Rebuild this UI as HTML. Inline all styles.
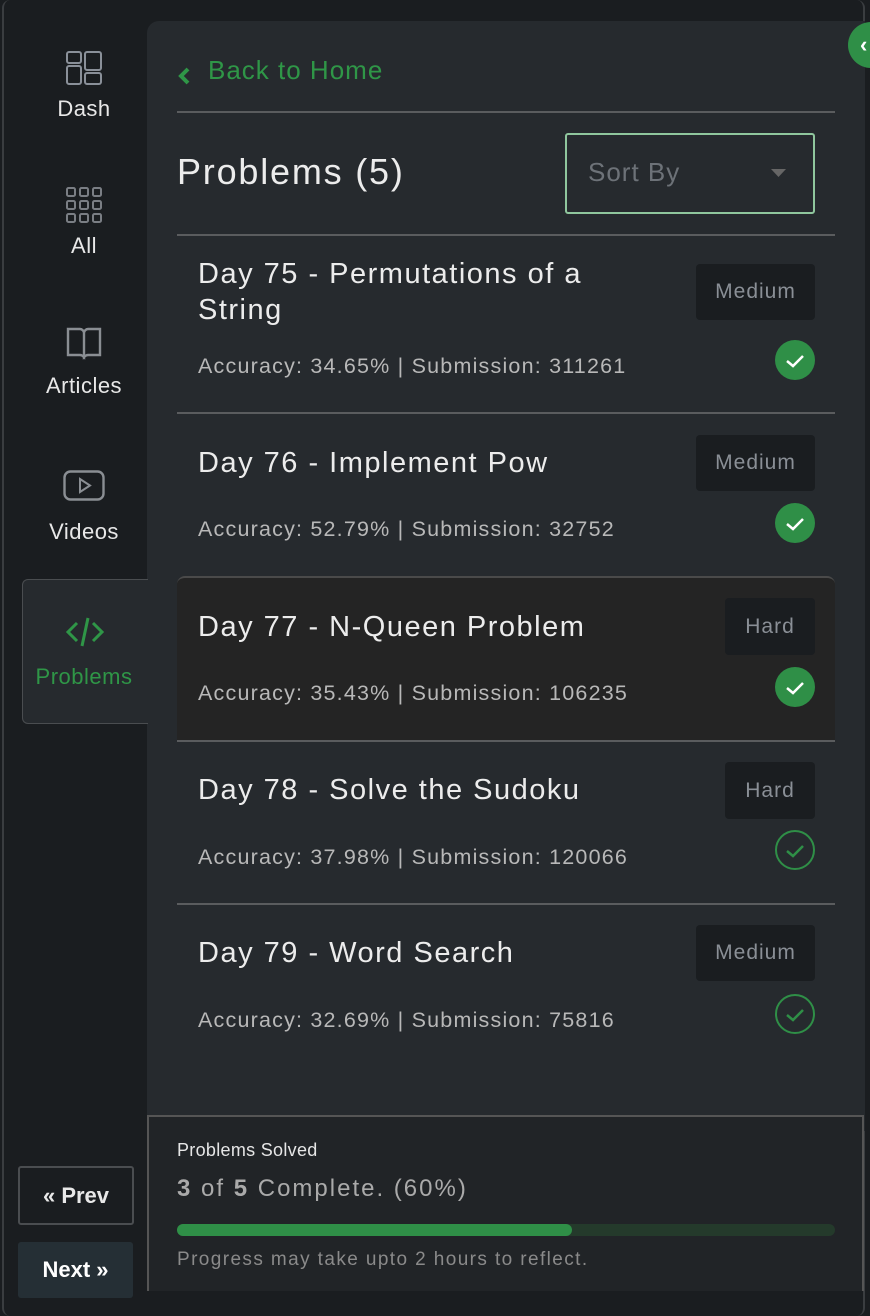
<!DOCTYPE html>
<html><head><meta charset="utf-8"><style>
*{margin:0;padding:0;box-sizing:border-box}
body{width:870px;height:1316px;background:#1a1d20;font-family:"Liberation Sans",sans-serif;position:relative;overflow:hidden;color:#e6e6e6}
.abs{position:absolute}
.frame{left:2px;top:0;width:863px;height:1316px;border:2px solid #3a3d40;border-top:none;border-bottom:none;border-radius:8px}
.nav{left:0;width:168px;text-align:center;font-size:22px;color:#e8e8e8;letter-spacing:0.5px}
.panel{left:147px;top:21px;width:718px;height:1110px;background:#262a2e;border-radius:12px 0 0 0}
.sep{left:177px;width:658px;height:2px;background:#5a5c5e}
.title{left:198px;font-size:29px;color:#ececec;line-height:36px;letter-spacing:1.5px}
.acc{left:198px;font-size:21.5px;color:#b8b8b8;letter-spacing:1.2px}
.badge{background:#1a1d20;color:#8a8f96;font-size:21px;border-radius:4px;text-align:center;letter-spacing:1px}
.chk{width:40px;height:40px;border-radius:50%;background:#2f8f47}
.chk.o{background:none;border:2px solid #2f8f47}
</style></head><body>
<div class="abs frame"></div>
<div class="abs panel"></div>

<svg class="abs" style="left:66px;top:51px" width="36" height="34" viewBox="0 0 36 34" fill="none" stroke="#8a9099" stroke-width="2"><rect x="1" y="1" width="14" height="11" rx="2"/><rect x="1" y="15" width="14" height="18" rx="2"/><rect x="19" y="1" width="16" height="18" rx="2"/><rect x="19" y="22" width="16" height="11" rx="2"/></svg>
<div class="abs nav" style="top:96px">Dash</div>
<svg class="abs" style="left:66px;top:187px" width="36" height="36" viewBox="0 0 36 36" fill="none" stroke="#7a7e84" stroke-width="2"><g id="r"><rect x="1" y="1" width="8" height="8" rx="1.5"/><rect x="14" y="1" width="8" height="8" rx="1.5"/><rect x="27" y="1" width="8" height="8" rx="1.5"/></g><use href="#r" y="13"/><use href="#r" y="26"/></svg>
<div class="abs nav" style="top:233px">All</div>
<svg class="abs" style="left:66px;top:327px" width="36" height="34" viewBox="0 0 36 34" fill="none" stroke="#8a8e93" stroke-width="2.4"><path d="M2 2h12c2 0 4 2 4 4v24c-1-1-2-2-4-2H2z M34 2H22c-2 0-4 2-4 4v24c1-1 2-2 4-2h12z"/></svg>
<div class="abs nav" style="top:373px">Articles</div>
<svg class="abs" style="left:63px;top:470px" width="42" height="32" viewBox="0 0 42 32" fill="none" stroke="#8a8e93" stroke-width="2.4"><rect x="1.5" y="1.5" width="39" height="28" rx="6"/><path d="M17 9v13l10-6.5z" stroke-width="2"/></svg>
<div class="abs nav" style="top:519px">Videos</div>
<div class="abs" style="left:22px;top:579px;width:126px;height:145px;background:#262a2e;border:1px solid #4a4d50;border-right:none;border-radius:6px 0 0 6px"></div>
<svg class="abs" style="left:66px;top:616px" width="38" height="32" viewBox="0 0 38 32" fill="none" stroke="#2f9647" stroke-width="3"><path d="M11 7 2 16l9 9M27 7l9 9-9 9M22 2l-6 28"/></svg>
<div class="abs nav" style="top:664px;color:#2f9647">Problems</div>

<div class="abs" style="left:18px;top:1166px;width:116px;height:59px;border:2px solid #4a4d50;border-radius:3px;font-size:22px;font-weight:bold;color:#e8e8e8;text-align:center;line-height:55px">« Prev</div>
<div class="abs" style="left:18px;top:1242px;width:115px;height:56px;background:#252f35;border-radius:3px;font-size:22px;font-weight:bold;color:#fff;text-align:center;line-height:56px">Next »</div>

<div class="abs" style="left:848px;top:22px;width:46px;height:46px;border-radius:50%;background:#2f8f47"></div>
<div class="abs" style="left:860px;top:32px;font-size:22px;font-weight:bold;color:#fff">‹</div>

<svg class="abs" style="left:178px;top:67px" width="12" height="18" viewBox="0 0 12 18"><path d="M10 2 3 9l7 7" fill="none" stroke="#2f9647" stroke-width="4"/></svg>
<div class="abs" style="left:208px;top:55px;font-size:26px;color:#2f9647;letter-spacing:1px">Back to Home</div>
<div class="abs sep" style="top:111px"></div>
<div class="abs" style="left:177px;top:151px;font-size:36px;color:#ececec;letter-spacing:1.8px">Problems (5)</div>
<div class="abs" style="left:565px;top:133px;width:250px;height:81px;border:2px solid #8fc69d;border-radius:3px"></div>
<div class="abs" style="left:588px;top:157px;font-size:26px;color:#6d7278;letter-spacing:1px">Sort By</div>
<svg class="abs" style="left:771px;top:169px" width="15" height="8"><path d="M0 0h15L7.5 8z" fill="#666"/></svg>
<div class="abs sep" style="top:234px"></div>

<div class="abs title" style="top:256px">Day 75 - Permutations of a<br>String</div>
<div class="abs badge" style="left:696px;top:264px;width:119px;height:56px;line-height:56px">Medium</div>
<div class="abs acc" style="top:354px">Accuracy: 34.65% | Submission: 311261</div>
<div class="abs chk" style="left:775px;top:340px"></div>
<div class="abs sep" style="top:412px"></div>

<div class="abs title" style="top:445px">Day 76 - Implement Pow</div>
<div class="abs badge" style="left:696px;top:435px;width:119px;height:56px;line-height:56px">Medium</div>
<div class="abs acc" style="top:517px">Accuracy: 52.79% | Submission: 32752</div>
<div class="abs chk" style="left:775px;top:503px"></div>

<div class="abs" style="left:177px;top:576px;width:658px;height:166px;background:#242424;border-top:2px solid #4a4a4a;border-bottom:2px solid #5a5c5e;border-radius:8px 8px 0 0"></div>
<div class="abs title" style="top:609px">Day 77 - N-Queen Problem</div>
<div class="abs badge" style="left:725px;top:598px;width:90px;height:57px;line-height:57px">Hard</div>
<div class="abs acc" style="top:681px">Accuracy: 35.43% | Submission: 106235</div>
<div class="abs chk" style="left:775px;top:667px"></div>

<div class="abs title" style="top:772px">Day 78 - Solve the Sudoku</div>
<div class="abs badge" style="left:725px;top:762px;width:90px;height:57px;line-height:57px">Hard</div>
<div class="abs acc" style="top:845px">Accuracy: 37.98% | Submission: 120066</div>
<div class="abs chk o" style="left:775px;top:830px"></div>
<div class="abs sep" style="top:903px"></div>

<div class="abs title" style="top:935px">Day 79 - Word Search</div>
<div class="abs badge" style="left:696px;top:925px;width:119px;height:56px;line-height:56px">Medium</div>
<div class="abs acc" style="top:1008px">Accuracy: 32.69% | Submission: 75816</div>
<div class="abs chk o" style="left:775px;top:994px"></div>

<svg class="abs" style="left:775px;top:340px" width="40" height="700" viewBox="0 0 40 700" fill="none" stroke-width="2.5">
<g stroke="#fff"><path d="M12 21l6 5 10-10"/><path d="M12 184l6 5 10-10"/><path d="M12 348l6 5 10-10"/></g>
<g stroke="#2f8f47"><path d="M12 511l6 5 10-10"/><path d="M12 675l6 5 10-10"/></g></svg>

<div class="abs" style="left:147px;top:1115px;width:717px;height:176px;background:#212427;border:2px solid #555;border-bottom:none"></div>
<div class="abs" style="left:177px;top:1140px;font-size:18px;color:#e6e6e6;letter-spacing:0.3px">Problems Solved</div>
<div class="abs" style="left:177px;top:1175px;font-size:24px;color:#aaa;letter-spacing:2px"><b>3</b> of <b>5</b> Complete. (60%)</div>
<div class="abs" style="left:177px;top:1224px;width:658px;height:12px;background:#243a2b;border-radius:6px"></div>
<div class="abs" style="left:177px;top:1224px;width:395px;height:12px;background:#2f8f47;border-radius:6px"></div>
<div class="abs" style="left:177px;top:1249px;font-size:19px;color:#8a8a8a;letter-spacing:1.4px">Progress may take upto 2 hours to reflect.</div>
</body></html>
